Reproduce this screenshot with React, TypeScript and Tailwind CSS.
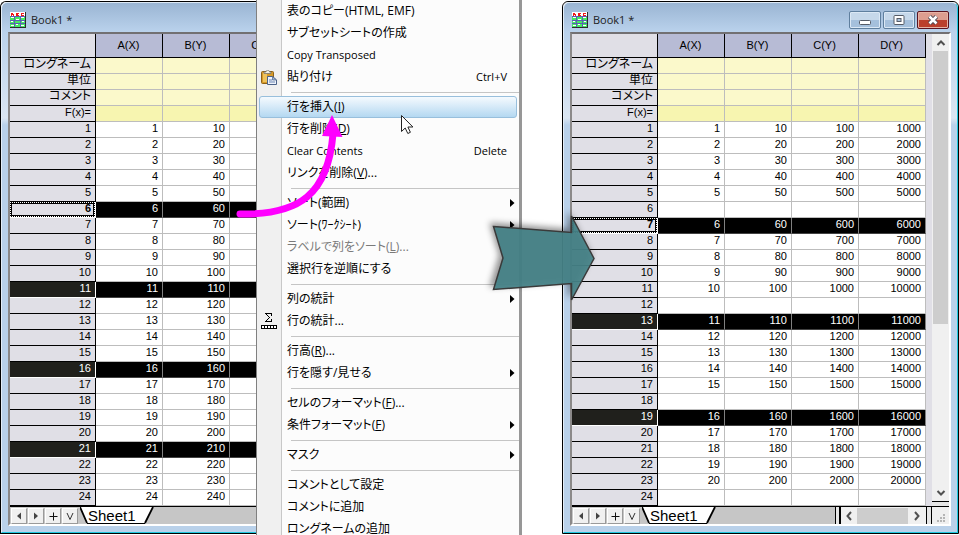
import React from "react";

type Row = { n: number; values: string[]; selected?: boolean; focused?: boolean };

type Entry =
  | { kind: "separator" }
  | {
      kind: "item";
      label: string;
      mnemonic?: string;
      tail?: string;
      shortcut?: string;
      submenu?: boolean;
      disabled?: boolean;
      hot?: boolean;
      latin?: boolean;
      icon?: "paste" | "stats";
    };

const numbers = Array.from({ length: 24 }, (_, i) => i + 1);

const beforeRows: Row[] = numbers.map((n) => ({
  n,
  values: [String(n), String(n * 10), ""],
  selected: n % 5 === 1 && n > 1,
  focused: n === 6,
}));

const source: (number | null)[] = [
  1, 2, 3, 4, 5, null, 6, 7, 8, 9, 10, null, 11, 12, 13, 14, 15, null, 16, 17, 18, 19, 20, null,
];

const afterRows: Row[] = source.map((v, i) => ({
  n: i + 1,
  values: v === null ? ["", "", "", ""] : [1, 10, 100, 1000].map((f) => String(v * f)),
  selected: v === 6 || v === 11 || v === 16,
  focused: v === 6,
}));

const sep: Entry = { kind: "separator" };

const entries: Entry[] = [
  { kind: "item", label: "表のコピー(HTML, EMF)" },
  { kind: "item", label: "サブセットシートの作成" },
  { kind: "item", label: "Copy Transposed", latin: true },
  { kind: "item", label: "貼り付け", shortcut: "Ctrl+V", icon: "paste" },
  sep,
  { kind: "item", label: "行を挿入", mnemonic: "I", hot: true },
  { kind: "item", label: "行を削除", mnemonic: "D" },
  { kind: "item", label: "Clear Contents", shortcut: "Delete", latin: true },
  { kind: "item", label: "リンクを削除", mnemonic: "V", tail: "..." },
  sep,
  { kind: "item", label: "ソート(範囲)", submenu: true },
  { kind: "item", label: "ソート(ﾜｰｸｼｰﾄ)", submenu: true },
  { kind: "item", label: "ラベルで列をソート", mnemonic: "L", tail: "...", disabled: true },
  { kind: "item", label: "選択行を逆順にする" },
  sep,
  { kind: "item", label: "列の統計", submenu: true },
  { kind: "item", label: "行の統計...", icon: "stats" },
  sep,
  { kind: "item", label: "行高", mnemonic: "R", tail: "..." },
  { kind: "item", label: "行を隠す/見せる", submenu: true },
  sep,
  { kind: "item", label: "セルのフォーマット", mnemonic: "F", tail: "..." },
  { kind: "item", label: "条件フォーマット", mnemonic: "F", submenu: true },
  sep,
  { kind: "item", label: "マスク", submenu: true },
  sep,
  { kind: "item", label: "コメントとして設定" },
  { kind: "item", label: "コメントに追加" },
  { kind: "item", label: "ロングネームの追加" },
];

function BookIcon() {
  return (
    <svg width="16" height="16" viewBox="0 0 16 16" shapeRendering="crispEdges" aria-hidden="true">
      <rect width="16" height="16" fill="#2b2b2b" />
      <rect width="15" height="15" fill="#ffffff" />
      <path d="M0 5h15v10H0z" fill="#45ea62" />
      <path d="M1 1h2v1h1v2H3V3H2v1H1zM6 1h3v1H8v1h1v1H6zM11 1h3v1h-2v1h2v1h-3z" fill="#f01818" />
      <path d="M1 5h3v1H1zM6 7h3v1H6zM11 5h3v1h-3zM1 9h2v1H1zM12 9h2v1h-2zM6 12h2v1H6zM1 13h3v1H1zM11 13h3v1h-3z" fill="#ffffff" />
      <path d="M4 4h1v11H4zM10 4h1v11h-1zM0 8h15v1H0zM0 4h15v1H0zM0 11h15v1H0z" fill="#5a5fb4" />
    </svg>
  );
}

function PasteIcon() {
  return (
    <svg width="16" height="15" viewBox="0 0 16 15" aria-hidden="true">
      <rect x="0.5" y="1.5" width="12" height="12" rx="1" fill="#d79a28" stroke="#8d6118" />
      <rect x="2" y="3" width="4" height="9" fill="#efc35c" />
      <path d="M3 3.5V2h2c0-2.4 3.500-2.400 3.500 0H10v1.500z" fill="#f1efe4" stroke="#77746a" strokeWidth="0.8" />
      <path d="M6.500 6.500h5l4 3.500v4.500h-9z" fill="#eef3fb" stroke="#4c6288" />
      <path d="M11.500 6.500v3.500h4z" fill="#9fb5d8" stroke="#4c6288" strokeWidth="0.7" />
      <path d="M8 10h3M8 12h6" stroke="#6d86b3" />
    </svg>
  );
}

function StatsIcon() {
  return (
    <svg width="16" height="16" viewBox="0 0 16 16" shapeRendering="crispEdges" aria-hidden="true">
      <path
        d="M4 0h7v3h-1V1H6v1h1v1h1v1h1v1H8v1H7v1H6v1h4V6h1v3H4V8h1V7h1V6h1V5h1V4H7V3H6V2H5V1H4z"
        fill="#000"
      />
      <path d="M0 12h16v4H0z" fill="#000" />
      <path d="M1 13h2v2H1zM4 13h2v2H4zM7 13h2v2H7zM10 13h2v2h-2zM13 13h2v2h-2z" fill="#fff" />
    </svg>
  );
}

function Grid({ columns, rows, fill }: { columns: string[]; rows: Row[]; fill?: boolean }) {
  const meta = ["ロングネーム", "単位", "コメント", "F(x)="];
  return (
    <table
      className={`table-fixed border-separate border-spacing-0 bg-white text-right text-[11px] leading-[13px] text-black ${
        fill ? "w-full" : "w-[287px] shrink-0"
      }`}
    >
      <colgroup>
        <col className="w-[86px]" />
        {columns.map((c) => (
          <col key={c} />
        ))}
      </colgroup>
      <thead>
        <tr className="h-6">
          <td className="border-r border-b border-black bg-[#e0dfe6] p-0" />
          {columns.map((c) => (
            <th
              key={c}
              scope="col"
              className="border-r border-b border-black bg-[#b7bbd5] p-0 pr-px pb-px text-center align-middle font-normal whitespace-nowrap"
            >
              {c}
            </th>
          ))}
        </tr>
      </thead>
      <tbody>
        {meta.map((m) => (
          <tr key={m} className="h-4">
            <th
              scope="row"
              className={`border-r border-b border-black bg-[#e0dfe6] p-0 pr-1 text-right align-top font-normal whitespace-nowrap ${
                m === "F(x)=" ? "" : "text-xs leading-[13px] [font-feature-settings:'palt']"
              }`}
            >
              {m}
            </th>
            {columns.map((c) => (
              <td
                key={c}
                className={`border-r border-b border-[#bdbdbd] p-0 ${m === "F(x)=" ? "bg-[#f7f5b0]" : "bg-[#fbf9cb]"}`}
              />
            ))}
          </tr>
        ))}
        {rows.map((r) => (
          <tr key={r.n} className="h-4">
            {r.focused ? (
              <th scope="row" className="border-r border-b border-white bg-black p-0 align-top font-bold">
                <div className="border border-dotted border-white">
                  <div className="h-[13px] border border-black bg-[#e0dfe6] pr-[2px] text-right leading-[9px]">{r.n}</div>
                </div>
              </th>
            ) : (
              <th
                scope="row"
                className={`border-r border-b p-0 pr-1 text-right align-top font-normal ${
                  r.selected ? "border-white bg-[#20201c] text-white" : "border-black bg-[#e0dfe6]"
                }`}
              >
                {r.n}
              </th>
            )}
            {r.values.map((v, i) => (
              <td
                key={i}
                className={`border-r border-b p-0 pr-1 align-top ${
                  r.selected ? "border-r-[#808080] border-b-[#424242] bg-black text-white" : "border-[#bdbdbd]"
                }`}
              >
                {v}
              </td>
            ))}
          </tr>
        ))}
      </tbody>
    </table>
  );
}

function NavButton({ label, children }: { label: string; children: React.ReactNode }) {
  return (
    <button
      type="button"
      aria-label={label}
      className="flex size-4 items-center justify-center border border-t-white border-r-[#9a9a9a] border-b-[#9a9a9a] border-l-white bg-[#f0f0f0]"
    >
      <svg width="10" height="10" viewBox="0 0 10 10" aria-hidden="true">
        {children}
      </svg>
    </button>
  );
}

function SheetBar({ scroll }: { scroll?: boolean }) {
  return (
    <div className="flex h-[18px] border-t border-black bg-[#c6c6c6]">
      <div className="flex gap-px pt-px pl-px">
        <NavButton label="First sheet">
          <path d="M7 1.500v7L3 5z" fill="#444" />
        </NavButton>
        <NavButton label="Next sheet">
          <path d="M3 1.500v7L7 5z" fill="#444" />
        </NavButton>
        <NavButton label="Add sheet">
          <path d="M1.500 5.500h8M5.500 1.500v8" stroke="#111" />
        </NavButton>
        <NavButton label="Sheet list">
          <path d="M2 2l3 6.500L8 2" stroke="#333" fill="none" />
        </NavButton>
      </div>
      <button
        type="button"
        className="relative ml-[2px] h-[17px] w-[74px] pl-2 text-left text-[15px] leading-[17px] text-black"
      >
        <svg className="absolute inset-0" width="74" height="17" viewBox="0 0 74 17" aria-hidden="true">
          <path d="M0 0l7 16h58l8-16z" fill="#fff" />
          <path d="M0 0l7 16M65 16l8-16" stroke="#000" strokeWidth="1.800" />
          <path d="M7 16.500h58" stroke="#000" />
        </svg>
        <span className="relative">Sheet1</span>
      </button>
      {scroll && (
        <>
          <div className="flex-1" />
          <div className="w-[6px] border-r-2 border-l border-black bg-[#e6e6e6]" />
          <div className="flex w-[86px] items-stretch border-r border-black bg-[#f0f0f0]">
            <button type="button" aria-label="Scroll left" className="flex w-4 items-center justify-center">
              <svg width="8" height="10" viewBox="0 0 8 10" aria-hidden="true">
                <path d="M6 1L2.500 5 6 9" stroke="#505050" strokeWidth="2" fill="none" />
              </svg>
            </button>
            <div className="flex-1 border-t border-[#f0f0f0] bg-[#cdcdcd]" />
            <button type="button" aria-label="Scroll right" className="flex w-[18px] items-center justify-center">
              <svg width="8" height="10" viewBox="0 0 8 10" aria-hidden="true">
                <path d="M2 1l3.500 4L2 9" stroke="#505050" strokeWidth="2" fill="none" />
              </svg>
            </button>
          </div>
          <div className="w-[5px] border-r border-black bg-[#e6e6e6]" />
          <div className="flex w-[17px] items-end justify-end bg-[#f0f0f0] pr-1 pb-[2px]">
            <svg width="8" height="8" viewBox="0 0 8 8" aria-hidden="true">
              <path d="M6 0h2v2H6zM3 3h2v2H3zM6 3h2v2H6zM0 6h2v2H0zM3 6h2v2H3zM6 6h2v2H6z" fill="#b5b5b5" />
            </svg>
          </div>
        </>
      )}
    </div>
  );
}

function VerticalScroll() {
  return (
    <div className="flex w-[17px] shrink-0 flex-col bg-[#f0f0f0]">
      <button type="button" aria-label="Scroll up" className="flex h-[17px] items-center justify-center">
        <svg width="10" height="8" viewBox="0 0 10 8" aria-hidden="true">
          <path d="M1.500 6L5 2.500 8.500 6" stroke="#505050" strokeWidth="2" fill="none" />
        </svg>
      </button>
      <div className="flex flex-1 flex-col px-px">
        <div className="grow-[273] bg-[#cdcdcd]" />
        <div className="grow-[160]" />
      </div>
      <button type="button" aria-label="Scroll down" className="flex h-[17px] items-center justify-center">
        <svg width="10" height="8" viewBox="0 0 10 8" aria-hidden="true">
          <path d="M1.500 2L5 5.500 8.500 2" stroke="#505050" strokeWidth="2" fill="none" />
        </svg>
      </button>
      <div className="h-[5px] border-t border-black bg-[#e6e6e6]" />
    </div>
  );
}

function CaptionButtons() {
  const plain =
    "flex h-[18px] w-8 items-center justify-center rounded-[2px] border border-[#5f7f9e] bg-linear-to-b from-[#c6d8ea] from-50% to-[#a5c0dc] to-50% shadow-[inset_0_0_0_1px_#dbe8f5]";
  return (
    <div className="ml-auto flex gap-[2px]">
      <button type="button" aria-label="Minimize" className={plain}>
        <svg width="12" height="12" viewBox="0 0 12 12" aria-hidden="true">
          <rect x="0.500" y="6.500" width="11" height="4" rx="1" fill="#fff" stroke="#555b66" />
        </svg>
      </button>
      <button type="button" aria-label="Maximize" className={plain}>
        <svg width="12" height="12" viewBox="0 0 12 12" aria-hidden="true">
          <rect x="1" y="1.500" width="10" height="9" rx="1" fill="#fff" stroke="#555b66" />
          <rect x="4" y="4.500" width="4" height="3" fill="#a9c2dd" stroke="#555b66" />
        </svg>
      </button>
      <button
        type="button"
        aria-label="Close"
        className="flex h-[18px] w-8 items-center justify-center rounded-[2px] border border-[#5b1420] bg-linear-to-b from-[#dd9d8f] from-50% to-[#bb3f2c] to-50% shadow-[inset_0_0_0_1px_#e6b3a6]"
      >
        <svg width="14" height="12" viewBox="0 0 14 12" aria-hidden="true">
          <path d="M3.500 2.500l7 7M10.500 2.500l-7 7" stroke="#4d4a55" strokeWidth="4.500" />
          <path d="M3.500 2.500l7 7M10.500 2.500l-7 7" stroke="#fff" strokeWidth="2.500" />
        </svg>
      </button>
    </div>
  );
}

function BookWindow({ columns, rows, full }: { columns: string[]; rows: Row[]; full?: boolean }) {
  return (
    <section
      aria-label="Book1"
      className={`mt-px border-y border-l border-black font-['Liberation_Sans','Noto_Sans_CJK_JP',sans-serif] ${
        full ? "rounded-t-md border-r" : "rounded-tl-md"
      }`}
    >
      <div
        className={`border-t border-b border-l border-t-[#dce8f4] border-b-[#1fc8e0] border-l-[#e4eef8] bg-[linear-gradient(#9ab5d3,#bad2ec_29px,#dbe6f2_115px,#b9d1ea_122px)] pb-[6px] pl-[6px] ${
          full ? "rounded-t-md border-r border-r-[#1fc8e0] pr-[6px]" : "rounded-tl-md"
        }`}
      >
        <header className="flex h-[29px] items-center pt-[5px] pr-[2px] pl-[2px]">
          <BookIcon />
          <h2 className="ml-[5px] font-['Open_Sans',sans-serif] text-[11px] text-[#1c1c1c]">Book1 *</h2>
          {full && <CaptionButtons />}
        </header>
        <div
          className={`border-t-2 border-b-2 border-l-2 border-t-[#727072] border-b-white border-l-[#8b8989] ${
            full ? "border-r-2 border-r-white" : ""
          }`}
        >
          <div className="flex bg-[#e0dfe6]">
            <Grid columns={columns} rows={rows} fill={full} />
            {full && (
              <>
                <div className="w-[6px] shrink-0" />
                <VerticalScroll />
              </>
            )}
          </div>
          <SheetBar scroll={full} />
        </div>
      </div>
    </section>
  );
}

function MenuRow({ entry }: { entry: Entry }) {
  if (entry.kind === "separator") {
    return <div role="separator" className="mt-1 mb-[3px] ml-[34px] h-px bg-[#c5c5c5]" />;
  }
  return (
    <button
      type="button"
      role="menuitem"
      disabled={entry.disabled}
      className={`flex h-[22px] w-full items-center text-left whitespace-nowrap ${
        entry.disabled ? "text-[#7a7a7a]" : "text-black"
      }`}
    >
      <span
        className={`mr-[2px] ml-[2px] flex h-[22px] flex-1 items-center rounded-[3px] border ${
          entry.hot ? "border-[#98bfdc] bg-linear-to-b from-[#f5fafe] to-[#b4d8f1]" : "border-transparent"
        }`}
      >
        <span className="flex w-[27px] shrink-0 items-center pl-px">
          {entry.icon === "paste" && <PasteIcon />}
          {entry.icon === "stats" && <StatsIcon />}
        </span>
        <span className={`flex-1 ${entry.latin ? "text-[11px] leading-[14px]" : ""}`}>
          {entry.label}
          {entry.mnemonic && (
            <>
              (<u>{entry.mnemonic}</u>){entry.tail}
            </>
          )}
        </span>
        {entry.shortcut && <span className="pr-[9px] text-[11px] leading-[14px]">{entry.shortcut}</span>}
        {entry.submenu && (
          <svg className="mr-px" width="5" height="8" viewBox="0 0 5 8" aria-hidden="true">
            <path d="M0 0l4.500 4L0 8z" fill="#000" />
          </svg>
        )}
      </span>
    </button>
  );
}

function ContextMenu() {
  return (
    <div
      role="menu"
      aria-label="Row menu"
      className="w-[266px] shrink-0 border-r-[3px] border-l border-r-[#979797] border-l-[#808080] bg-[linear-gradient(90deg,#f0f0f0_24px,#c8c8c8_24px,#c8c8c8_25px,#fcfcfc_25px)] font-['Open_Sans','Noto_Sans_CJK_JP',sans-serif] text-xs leading-[14px] [font-feature-settings:'palt']"
    >
      {entries.map((e, i) => (
        <MenuRow key={i} entry={e} />
      ))}
    </div>
  );
}

export default function App() {
  return (
    <main className="relative flex h-screen items-start overflow-hidden bg-white">
      <div className="w-64 shrink-0 overflow-hidden">
        <BookWindow columns={["A(X)", "B(Y)", "C(Y)"]} rows={beforeRows} />
      </div>
      <ContextMenu />
      <div className="ml-10 min-w-0 flex-1">
        <BookWindow columns={["A(X)", "B(Y)", "C(Y)", "D(Y)"]} rows={afterRows} full />
      </div>

      <svg
        className="pointer-events-none absolute top-[110px] left-[230px]"
        width="120"
        height="110"
        viewBox="230 110 120 110"
        aria-hidden="true"
      >
        <path d="M240 214C300 215 328 194 333 134" fill="none" stroke="#ff00ff" strokeWidth="7" strokeLinecap="round" />
        <path d="M332 115l10.500 22-20.500-1z" fill="#ff00ff" />
      </svg>
      <svg
        className="pointer-events-none absolute top-[114px] left-[400px]"
        width="14"
        height="21"
        viewBox="0 0 14 21"
        aria-hidden="true"
      >
        <path d="M1.500 1.500v16l3.700-3.500 2.600 5.500 2.600-1.200-2.500-5.300h5z" fill="#fff" stroke="#222" />
      </svg>
      <svg
        className="pointer-events-none absolute top-[205px] left-[480px]"
        width="125"
        height="105"
        viewBox="480 205 125 105"
        aria-hidden="true"
      >
        <path
          className="drop-shadow-[-3px_-3px_3px_rgba(0,0,0,0.45)]"
          d="M493.500 226.500L571.500 232.500V216L594 258.500L571.500 300V283.500L493.500 289.500L503 258Z"
          fill="#458287"
          fillOpacity="0.940"
          stroke="#3a3a3a"
          strokeWidth="1.500"
        />
      </svg>
    </main>
  );
}
